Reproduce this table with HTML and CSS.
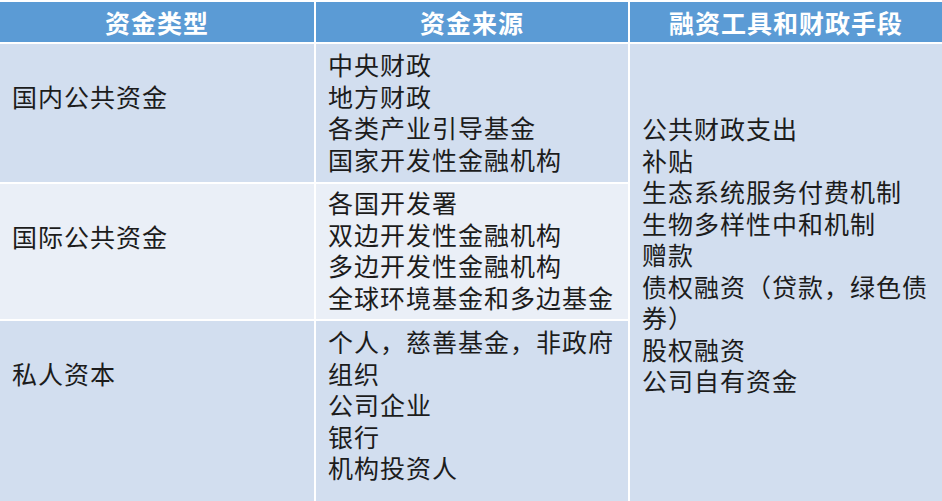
FILE: index.html
```html
<!DOCTYPE html>
<html lang="zh-CN">
<head>
<meta charset="utf-8">
<title>资金类型</title>
<link rel="stylesheet" href="styles.css">
</head>
<body>
<div class="table">
  <div class="head">资金类型</div>
  <div class="head">资金来源</div>
  <div class="head">融资工具和财政手段</div>

  <div class="cell type dark">国内公共资金</div>
  <div class="cell src dark">中央财政<br>地方财政<br>各类产业引导基金<br>国家开发性金融机构</div>
  <div class="cell tools dark">公共财政支出<br>补贴<br>生态系统服务付费机制<br>生物多样性中和机制<br>赠款<br>债权融资（贷款，绿色债券）<br>股权融资<br>公司自有资金</div>

  <div class="cell type light">国际公共资金</div>
  <div class="cell src src2 light">各国开发署<br>双边开发性金融机构<br>多边开发性金融机构<br>全球环境基金和多边基金</div>

  <div class="cell type dark">私人资本</div>
  <div class="cell src dark">个人，慈善基金，非政府组织<br>公司企业<br>银行<br>机构投资人</div>
</div>
</body>
</html>
```
FILE: styles.css
```css
html, body {
  margin: 0;
  padding: 0;
  background: #ffffff;
}
body {
  width: 942px;
  height: 501px;
  overflow: hidden;
}
.table {
  display: grid;
  grid-template-columns: 314px 312px 312px;
  grid-template-rows: 40px 138px 135px 180px;
  gap: 2px;
  padding-top: 2px;
  background: #ffffff;
  font-family: "Noto Sans CJK SC", "Noto Sans", sans-serif;
  color: #1c1c1c;
}
.head {
  background: #5b9bd5;
  color: #ffffff;
  font-size: 25px;
  font-weight: 700;
  letter-spacing: 1px;
  line-height: 40px;
  text-align: center;
}
.cell {
  font-size: 25px;
  letter-spacing: 1px;
  line-height: 31.5px;
  padding-left: 12px;
}
.dark { background: #d2deef; }
.light { background: #eaeff7; }
.type { padding-top: 37px; }
.src { padding-top: 5px; }
.src2 { padding-top: 3px; }
.tools {
  grid-column: 3;
  grid-row: 2 / 5;
  padding-top: 69px;
}
```
